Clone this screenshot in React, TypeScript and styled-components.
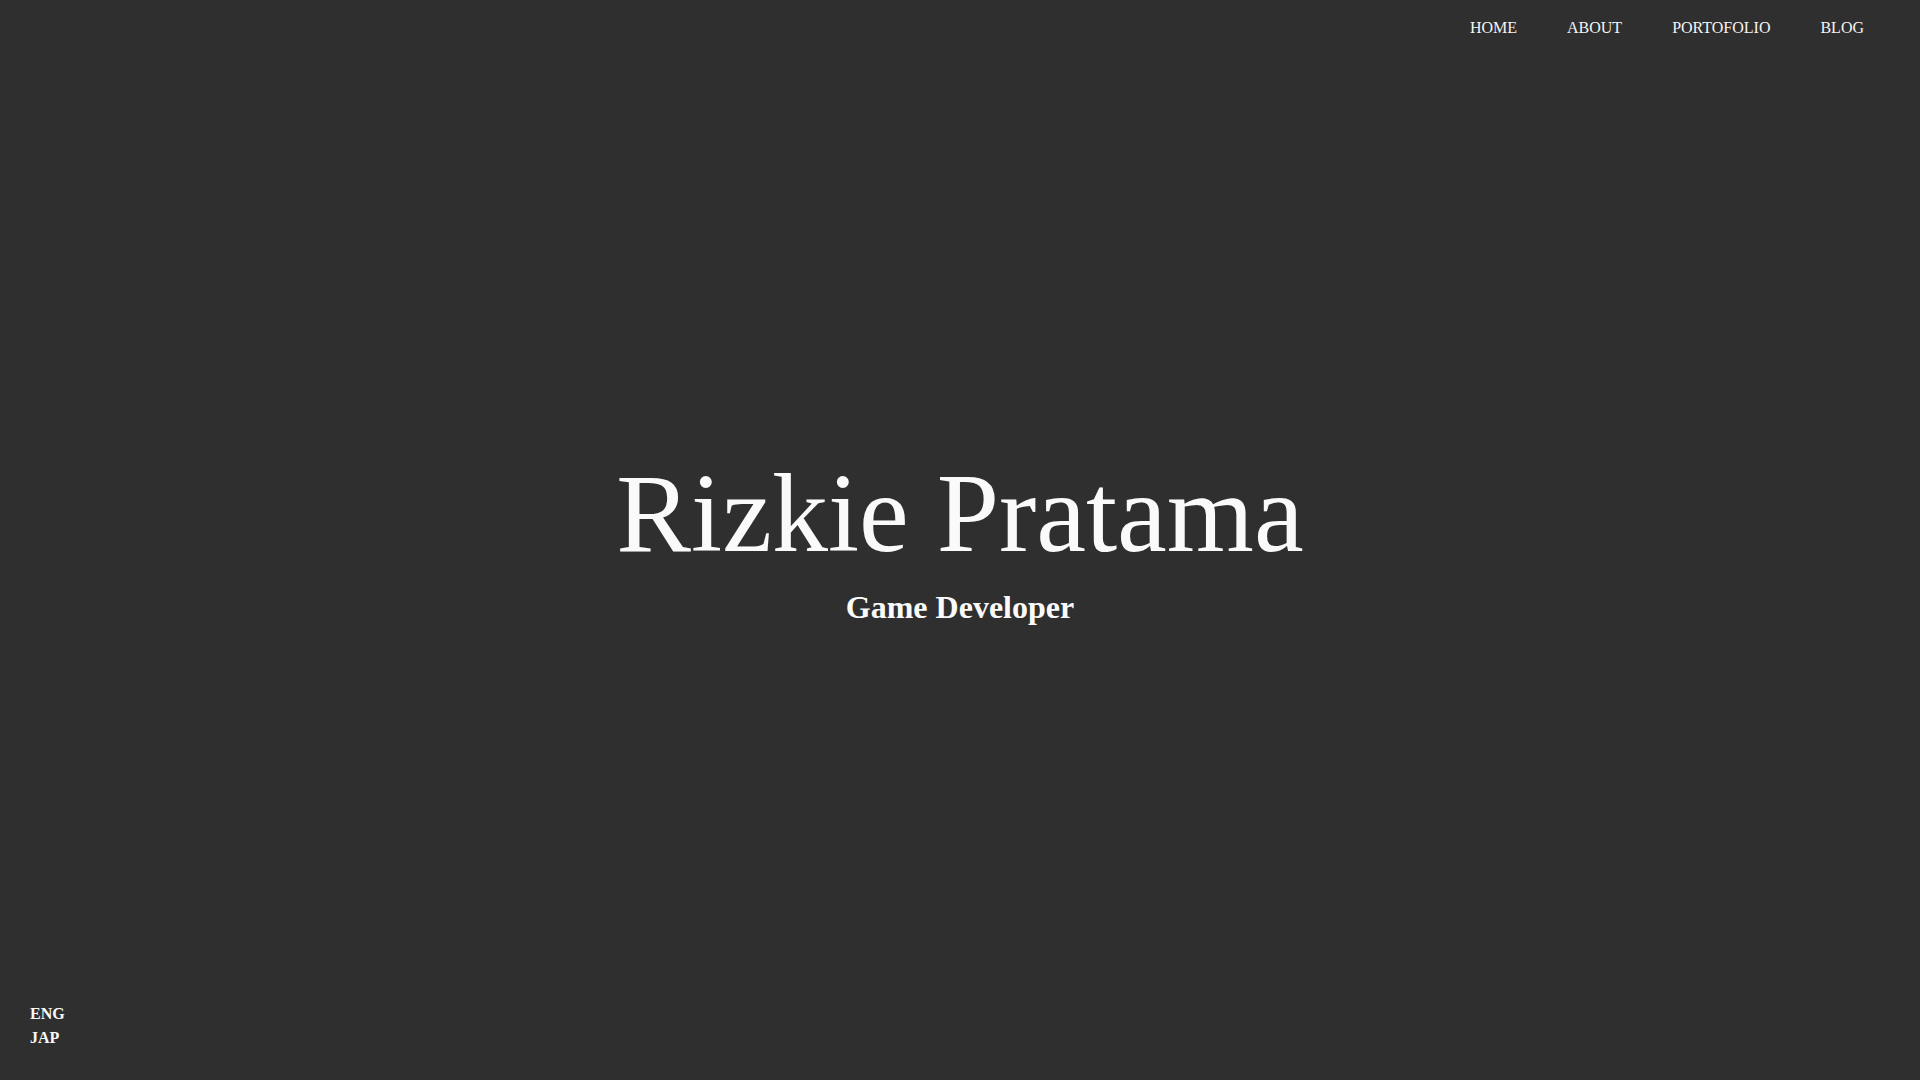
import React from "react";
import styled, { createGlobalStyle } from "styled-components";

const GlobalStyle = createGlobalStyle`
  html, body {
    margin: 0;
    padding: 0;
    background: #2f2f2f;
  }
  body {
    font-family: "Liberation Serif", "Times New Roman", serif;
    color: #fafafa;
  }
`;

const Page = styled.div`
  min-height: 100vh;
  display: flex;
  flex-direction: column;
  background: #2f2f2f;
  box-sizing: border-box;
`;

const Nav = styled.nav`
  display: flex;
  justify-content: flex-end;
  gap: 50px;
  padding: 19px 56px 0 0;
`;

const NavLink = styled.a`
  font-size: 16px;
  line-height: 18px;
  color: #f4f4f4;
  text-decoration: none;
  text-transform: uppercase;
  cursor: pointer;
`;

const Main = styled.main`
  flex: 1;
  display: flex;
  flex-direction: column;
  align-items: center;
  justify-content: center;
  padding-top: 35px;
`;

const Title = styled.h1`
  margin: 0;
  font-size: 112px;
  font-weight: 400;
  line-height: 129px;
  color: #fafafa;
`;

const Subtitle = styled.h2`
  margin: 11px 0 0;
  font-size: 32px;
  font-weight: 700;
  line-height: 37px;
  color: #fafafa;
`;

const Footer = styled.footer`
  display: flex;
  flex-direction: column;
  align-items: flex-start;
  padding: 0 0 30px 30px;
`;

const Lang = styled.span`
  font-size: 16px;
  font-weight: 700;
  line-height: 24px;
  color: #fafafa;
  cursor: pointer;
`;

export default function App() {
  return (
    <>
      <GlobalStyle />
      <Page>
        <Nav>
          <NavLink>Home</NavLink>
          <NavLink>About</NavLink>
          <NavLink>Portofolio</NavLink>
          <NavLink>Blog</NavLink>
        </Nav>
        <Main>
          <Title>Rizkie Pratama</Title>
          <Subtitle>Game Developer</Subtitle>
        </Main>
        <Footer>
          <Lang>ENG</Lang>
          <Lang>JAP</Lang>
        </Footer>
      </Page>
    </>
  );
}
